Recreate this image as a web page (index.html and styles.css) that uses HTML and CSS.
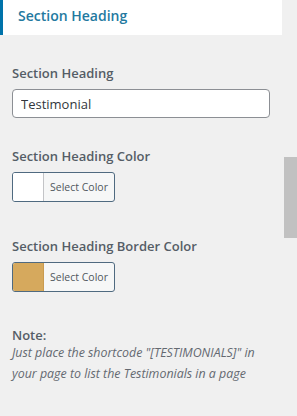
FILE: index.html
```html
<!DOCTYPE html>
<html lang="en">
<head>
  <meta charset="UTF-8">
  <meta name="viewport" content="width=device-width, initial-scale=1.0">
  <title>Section Heading</title>
  <link rel="stylesheet" href="styles.css">
</head>
<body>
  <div class="panel">
    <h3 class="section-title">Section Heading</h3>

    <div class="control">
      <label class="control-label" for="sectionHeading">Section Heading</label>
      <input type="text" id="sectionHeading" class="text-input" value="Testimonial">
    </div>

    <div class="control">
      <span class="control-label">Section Heading Color</span>
      <button type="button" class="color-btn">
        <span class="swatch"></span>
        <span class="color-text">Select Color</span>
      </button>
    </div>

    <div class="control control-color">
      <span class="control-label">Section Heading Border Color</span>
      <button type="button" class="color-btn">
        <span class="swatch swatch-gold"></span>
        <span class="color-text">Select Color</span>
      </button>
    </div>

    <div class="control note">
      <span class="control-label">Note:</span>
      <p class="description">Just place the shortcode "[TESTIMONIALS]" in your page to list the Testimonials in a page</p>
    </div>
  </div>
  <div class="scroll-thumb"></div>
</body>
</html>
```

FILE: styles.css
```css
/* General Styles */
body {
  font-family: "Open Sans", "Noto Sans", Arial, sans-serif;
  background-color: #f0f0f0;
  margin: 0;
  padding: 0;
  width: 297px;
  height: 416px;
  overflow: hidden;
  position: relative;
}

.panel {
  width: 282px;
}

.section-title {
  margin: 0;
  height: 35px;
  box-sizing: border-box;
  background-color: #fff;
  border-left: 3px solid #0073aa;
  padding: 6px 0 0 15px;
  font-size: 14px;
  font-weight: 600;
  color: #23799f;
  line-height: 20px;
}

.control {
  padding: 0 12px;
  margin-top: 29px;
}

.control-label {
  display: block;
  font-size: 13px;
  font-weight: 600;
  color: #555d66;
  line-height: 18px;
  margin-bottom: 7px;
}

.text-input {
  display: block;
  width: 258px;
  height: 29px;
  box-sizing: border-box;
  border: 1px solid #8c8f94;
  border-radius: 4px;
  padding: 0 8px;
  font-family: inherit;
  font-size: 13px;
  color: #32373c;
  background: #fff;
}

.control-color {
  margin-top: 35px;
}

.color-btn {
  display: flex;
  align-items: stretch;
  width: 103px;
  height: 30px;
  padding: 0;
  border: 1px solid #4f6a80;
  border-radius: 3px;
  background: #f6f7f7;
  overflow: hidden;
  cursor: pointer;
}

.swatch {
  width: 30px;
  background: #fff;
  border-right: 1px solid #c3c4c7;
}

.swatch-gold {
  background: #d6a95d;
  border-right-color: #c99b50;
}

.color-text {
  flex: 1;
  align-self: center;
  font-family: "Open Sans", "Noto Sans", Arial, sans-serif;
  font-size: 10.5px;
  color: #50575e;
  text-align: center;
}

.note {
  margin-top: 34px;
}

.note .control-label {
  margin-bottom: -2px;
}

.description {
  margin: 0;
  font-size: 12.4px;
  font-style: italic;
  color: #646970;
  line-height: 21px;
}

.scroll-thumb {
  position: absolute;
  left: 284px;
  top: 157px;
  width: 13px;
  height: 81px;
  background: #c1c1c1;
}
```
